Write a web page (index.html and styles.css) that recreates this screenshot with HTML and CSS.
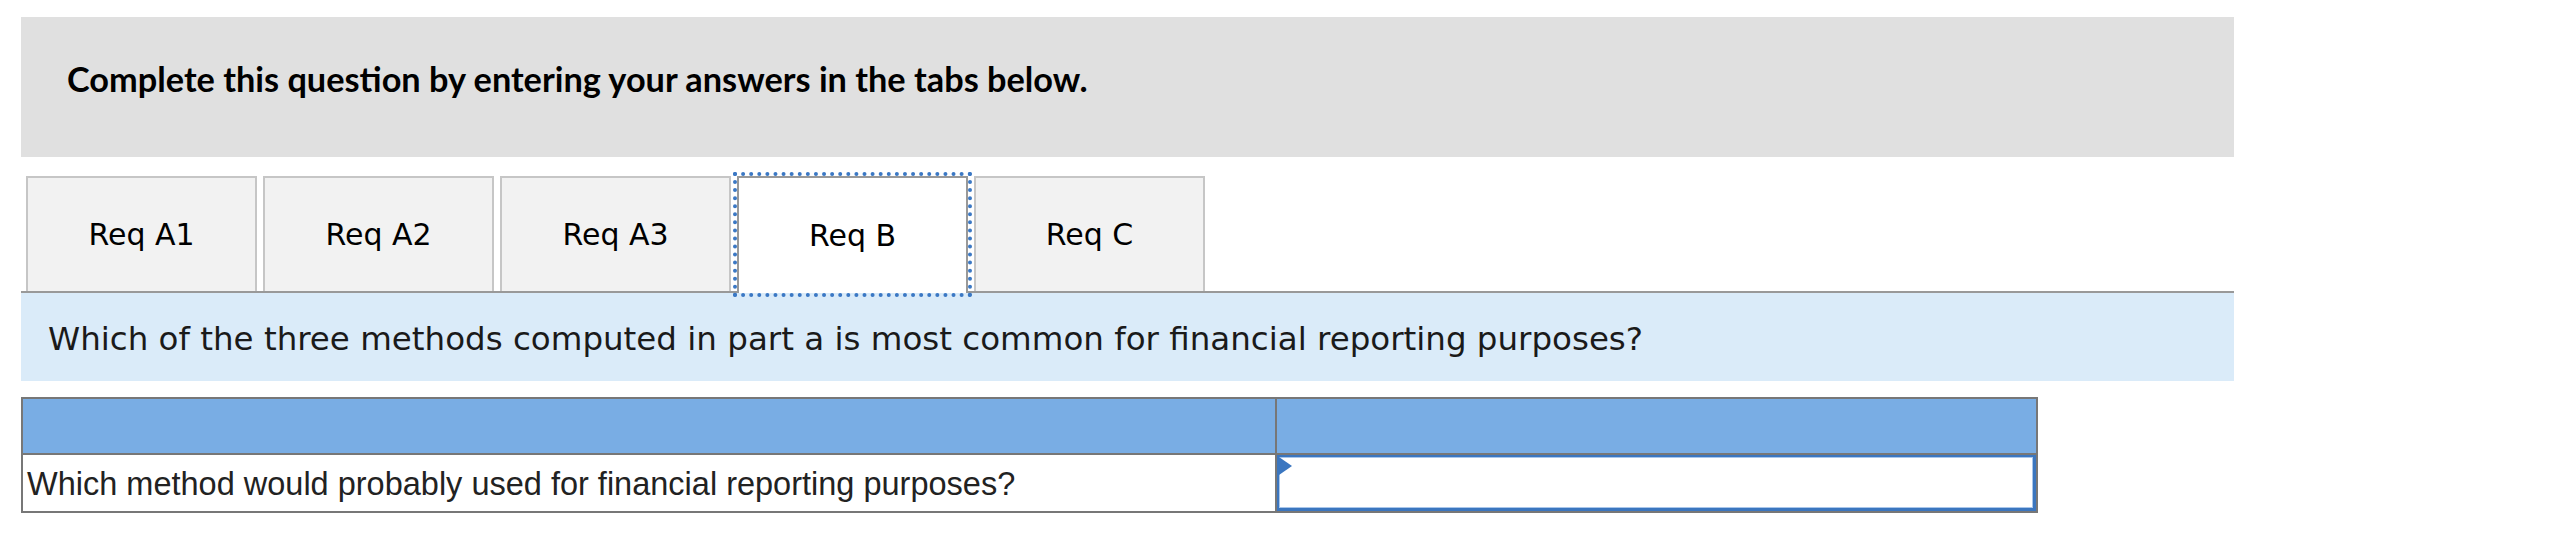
FILE: index.html
```html
<!DOCTYPE html>
<html lang="en">
<head>
<meta charset="utf-8">
<title>Complete this question</title>
<link rel="stylesheet" href="styles.css">
</head>
<body>
<div class="page">
  <div class="instructions">
    <p class="instructions-text">Complete this question by entering your answers in the tabs below.</p>
  </div>

  <div class="tabs">
    <div class="tab">Req A1</div>
    <div class="tab">Req A2</div>
    <div class="tab">Req A3</div>
    <div class="tab tab-active">Req B</div>
    <div class="tab">Req C</div>
  </div>

  <div class="prompt">
    <p class="prompt-text">Which of the three methods computed in part a is most common for financial reporting purposes?</p>
  </div>

  <table class="answer-grid">
    <tr class="head-row">
      <th class="col-label"></th>
      <th class="col-input"></th>
    </tr>
    <tr class="body-row">
      <td class="label-cell">Which method would probably used for financial reporting purposes?</td>
      <td class="input-cell"><div class="input-box"><span class="flag"></span></div></td>
    </tr>
  </table>
</div>
</body>
</html>
```

FILE: styles.css
```css
html, body {
  margin: 0;
  padding: 0;
  background: #ffffff;
}

.page {
  padding: 17px 0 0 21px;
  width: 2213px;
}

.instructions {
  background: #e0e0e0;
  height: 140px;
  display: flex;
  align-items: center;
  padding: 0 0 18px 46px;
  box-sizing: border-box;
}

.instructions-text {
  margin: 0;
  font-family: "Lato", "Open Sans", sans-serif;
  font-weight: 700;
  font-size: 34.3px;
  color: #000000;
}

.tabs {
  display: flex;
  gap: 6px;
  padding-left: 5px;
  margin-top: 19px;
  align-items: flex-end;
  position: relative;
  z-index: 1;
}

.tab {
  width: 231px;
  height: 115px;
  box-sizing: border-box;
  border: 2px solid #c6c6c6;
  border-bottom: none;
  background: #f2f2f2;
  display: flex;
  align-items: center;
  justify-content: center;
  font-family: "DejaVu Sans", Verdana, sans-serif;
  font-size: 30px;
  color: #000000;
}

.tab-active {
  background: #ffffff;
  border-color: #999999;
  height: 117px;
  margin-bottom: -2px;
  outline: 4px dotted #3b78c4;
  outline-offset: 0;
}

.prompt {
  border-top: 2px solid #999999;
  background: #daebf9;
  height: 90px;
  box-sizing: border-box;
  display: flex;
  align-items: center;
  padding: 4px 27px 0 27px;
}

.prompt-text {
  margin: 0;
  font-family: "DejaVu Sans", Verdana, sans-serif;
  font-size: 32.5px;
  color: #1a1a1a;
}

.answer-grid {
  margin-top: 16px;
  width: 2017px;
  border-collapse: collapse;
  border: 2px solid #777777;
}

.answer-grid th,
.answer-grid td {
  border: 2px solid #777777;
  padding: 0;
}

.head-row th {
  background: #79ade4;
  height: 54px;
}

.col-label {
  width: 1252px;
}

.label-cell {
  height: 54px;
  padding: 2px 0 0 4px !important;
  font-family: "Liberation Sans", Arial, sans-serif;
  font-size: 32.5px;
  color: #222222;
  text-align: left;
  vertical-align: middle;
  line-height: 1;
}

.input-cell {
  height: 54px;
  vertical-align: top;
}

.input-box {
  position: relative;
  height: 56px;
  box-sizing: border-box;
  border-style: solid;
  border-color: #3b76bf;
  border-width: 2px 3px 3px 2px;
  box-shadow: inset 0 0 0 1px #a9c6ea;
  background: #ffffff;
}

.flag {
  position: absolute;
  left: 0;
  top: 0;
  width: 0;
  height: 0;
  border-top: 9px solid transparent;
  border-bottom: 9px solid transparent;
  border-left: 13px solid #3a76c0;
}
```
